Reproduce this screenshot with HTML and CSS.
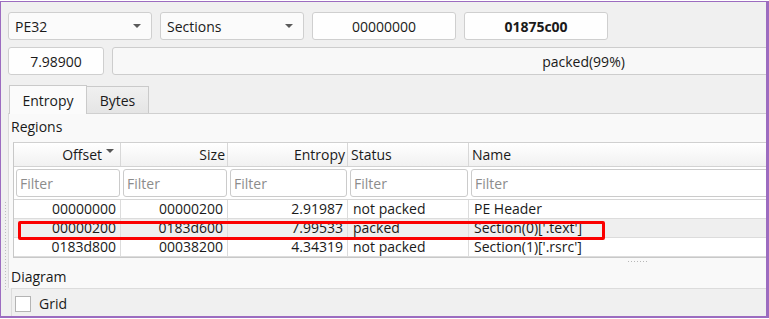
FILE: index.html
```html
<!DOCTYPE html>
<html>
<head>
<meta charset="utf-8">
<link rel="stylesheet" href="styles.css">
</head>
<body>
<div class="window">
  <div class="row row1">
    <div class="combo"><span>PE32</span><i class="arrow"></i></div>
    <div class="combo"><span>Sections</span><i class="arrow"></i></div>
    <div class="field">00000000</div>
    <div class="field bold">01875c00</div>
  </div>
  <div class="row row2">
    <div class="field small">7.98900</div>
    <div class="bar">packed(99%)</div>
  </div>
  <div class="tabbar">
    <div class="tab active">Entropy</div>
    <div class="tab">Bytes</div>
  </div>
  <div class="pane">
    <div class="label">Regions</div>
    <div class="table">
      <div class="thead">
        <div class="th r">Offset<i class="sort"></i></div>
        <div class="th r">Size</div>
        <div class="th r">Entropy</div>
        <div class="th">Status</div>
        <div class="th">Name</div>
      </div>
      <div class="filters">
        <div class="fc"><div class="filter">Filter</div></div>
        <div class="fc"><div class="filter">Filter</div></div>
        <div class="fc"><div class="filter">Filter</div></div>
        <div class="fc"><div class="filter">Filter</div></div>
        <div class="fc"><div class="filter">Filter</div></div>
      </div>
      <div class="tr">
        <div class="td r">00000000</div>
        <div class="td r">00000200</div>
        <div class="td r">2.91987</div>
        <div class="td">not packed</div>
        <div class="td">PE Header</div>
      </div>
      <div class="tr sel">
        <div class="td r">00000200</div>
        <div class="td r">0183d600</div>
        <div class="td r">7.99533</div>
        <div class="td">packed</div>
        <div class="td">Section(0)['.text']</div>
      </div>
      <div class="tr">
        <div class="td r">0183d800</div>
        <div class="td r">00038200</div>
        <div class="td r">4.34319</div>
        <div class="td">not packed</div>
        <div class="td">Section(1)['.rsrc']</div>
      </div>
      <div class="highlight"></div>
    </div>
    <div class="splitter"><span class="dots"></span></div>
    <div class="label diagram">Diagram</div>
  </div>
  <div class="group">
    <label class="check"><span class="box"></span>Grid</label>
  </div>
</div>
</body>
</html>
```

FILE: styles.css
```css
* { box-sizing: border-box; }
html, body { margin: 0; padding: 0; }
body {
  background: #ffffff;
  font-family: "Open Sans", "Noto Sans", sans-serif;
  font-size: 14px;
  color: #1a1a1a;
  width: 769px;
  height: 319px;
  overflow: hidden;
}
.window {
  position: relative;
  margin-top: 1px;
  height: 317px;
  width: 769px;
  background: #f0f0f0;
  border-left: 1px solid #9c6cc0;
  border-top: 1px solid #9c6cc0;
  border-right: 3px solid #9c6cc0;
  border-bottom: 2px solid #9c6cc0;
  padding: 10px 0 0 7px;
  overflow: hidden;
  display: flex;
  flex-direction: column;
}
.window::before {
  content: "";
  position: absolute;
  left: 4px;
  top: 200px;
  width: 1px;
  height: 90px;
  background: repeating-linear-gradient(180deg, #bdbdbd 0 1px, transparent 1px 3px);
}
.row { display: flex; gap: 8px; flex: none; }
.row1 { height: 28px; margin-bottom: 7px; }
.row2 { height: 28px; margin-bottom: 9px; width: 1047px; }
.combo, .field {
  width: 144px;
  height: 28px;
  background: #fefefe;
  border: 1px solid #cfcfcf;
  border-radius: 3px;
  display: flex;
  align-items: center;
}
.combo { padding: 0 6px 0 6px; justify-content: space-between; background: #fbfbfb; }
.arrow {
  width: 0; height: 0;
  border-left: 4px solid transparent;
  border-right: 4px solid transparent;
  border-top: 4px solid #5a5a5a;
  margin-right: 4px;
}
.field { justify-content: center; }
.field.small { width: 96px; }
.bold { font-weight: 700; }
.bar {
  flex: 1;
  height: 28px;
  background: #f8f8f8;
  border: 1px solid #cdcdcd;
  border-radius: 3px;
  display: flex;
  align-items: center;
  justify-content: center;
}
.tabbar {
  display: flex;
  align-items: flex-end;
  height: 29px;
  flex: none;
  padding-left: 1px;
}
.tab {
  height: 27px;
  padding: 0 13px;
  display: flex;
  align-items: center;
  border: 1px solid #cacaca;
  border-bottom: none;
  background: linear-gradient(#f0f0f0, #e5e5e5);
}
.tab.active {
  height: 29px;
  width: 78px;
  justify-content: center;
  background: #fbfbfb;
  margin-bottom: -1px;
  position: relative;
  z-index: 1;
}
.tab + .tab { border-left: none; width: 62px; justify-content: center; }
.pane {
  flex: none;
  height: 175px;
  width: 1000px;
  background: #f9f9f9;
  border-top: 1px solid #d0d0d0;
  border-left: 1px solid #dadada;
  display: flex;
  flex-direction: column;
  padding-left: 1px;
}
.label { height: 28px; line-height: 26px; padding-left: 1px; flex: none; }
.table {
  position: relative;
  margin-left: 3px;
  border: 1px solid #c8c8c8;
  border-top-color: #d0d0d0;
  background: #ffffff;
  width: 900px;
  flex: none;
}
.thead, .filters, .tr {
  display: grid;
  grid-template-columns: 107px 107px 120px 121px 1fr;
}
.thead {
  height: 24px;
  background: linear-gradient(#ffffff, #f1f1f1);
  border-bottom: 1px solid #d2d2d2;
}
.th {
  display: flex;
  align-items: center;
  padding: 0 2px 0 3px;
  border-right: 1px solid #d8d8d8;
}
.th.r { justify-content: flex-end; }
.sort {
  width: 0; height: 0;
  border-left: 4px solid transparent;
  border-right: 4px solid transparent;
  border-top: 4px solid #555;
  margin: 0 4px 8px 4px;
}
.filters { height: 33px; border-bottom: 1px solid #d6d6d6; }
.fc { padding: 2px 1px 2px 2px; }
.filter {
  height: 28px;
  border: 1px solid #cbcbcb;
  border-radius: 3px;
  background: #fff;
  color: #8c8c8c;
  display: flex;
  align-items: center;
  padding-left: 3px;
}
.tr { height: 19px; border-bottom: 1px solid #dcdcdc; }
.tr:last-of-type { border-bottom: none; }
.tr.sel { background: #efefef; }
.td {
  line-height: 18px;
  padding: 0 4px 0 5px;
  border-right: 1px solid #dcdcdc;
  white-space: nowrap;
}
.td.r { text-align: right; padding-right: 4px; }
.highlight {
  position: absolute;
  left: 4px;
  top: 78px;
  width: 587px;
  height: 19px;
  border: 3px solid #fb0000;
  border-radius: 2px;
  pointer-events: none;
}
.splitter {
  height: 9px;
  flex: none;
  position: relative;
}
.dots {
  position: absolute;
  left: 618px;
  top: 3px;
  width: 20px;
  height: 1px;
  background: repeating-linear-gradient(90deg, #b8b8b8 0 1px, transparent 1px 3px);
}
.diagram { height: 21px; line-height: 20px; }
.group {
  flex: 1;
  margin-left: 3px;
  border-left: 1px solid #dcdcdc;
  border-top: 1px solid #dcdcdc;
  background: #f0f0f0;
  padding: 6px 0 0 3px;
}
.check { display: flex; align-items: center; gap: 8px; height: 17px; }
.box {
  width: 16px; height: 16px;
  border: 1px solid #b4b4b4;
  background: #fff;
}
```
